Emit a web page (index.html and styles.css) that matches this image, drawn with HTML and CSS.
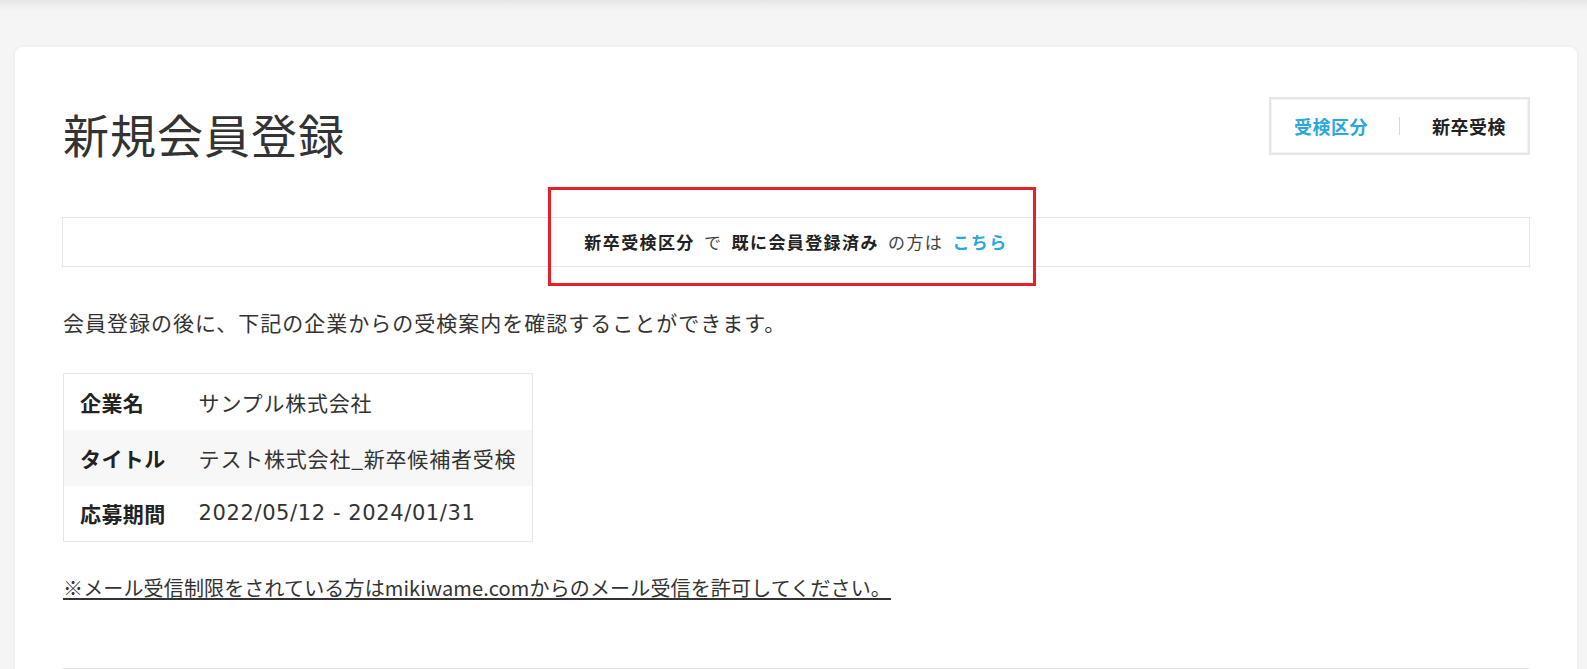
FILE: index.html
```html
<!DOCTYPE html>
<html lang="ja">
<head>
<meta charset="utf-8">
<title>新規会員登録</title>
<link rel="stylesheet" href="styles.css">
</head>
<body>
<div class="topbar"></div>
<main class="card">
  <div class="head-row">
    <h1 class="title">新規会員登録</h1>
    <div class="category">
      <span class="category-label">受検区分</span>
      <span class="category-sep"></span>
      <span class="category-value">新卒受検</span>
    </div>
  </div>

  <div class="notice-wrap">
    <div class="notice">
      <strong>新卒受検区分</strong> で <strong>既に会員登録済み</strong> の方は <a class="notice-link" href="#">こちら</a>
    </div>
    <div class="highlight"></div>
  </div>

  <p class="lead">会員登録の後に、下記の企業からの受検案内を確認することができます。</p>

  <table class="info">
    <tr>
      <th>企業名</th>
      <td>サンプル株式会社</td>
    </tr>
    <tr class="alt">
      <th>タイトル</th>
      <td>テスト株式会社_新卒候補者受検</td>
    </tr>
    <tr>
      <th>応募期間</th>
      <td class="date">2022/05/12 - 2024/01/31</td>
    </tr>
  </table>

  <p class="mail-note"><a href="#" class="mail-link">※メール受信制限をされている方はmikiwame.comからのメール受信を許可してください。</a></p>

  <hr class="divider">
  <div class="spacer"></div>
</main>
</body>
</html>
```

FILE: styles.css
```css
html, body {
  margin: 0;
  padding: 0;
  overflow: hidden;
}
body {
  background: #f5f5f5;
  font-family: "Noto Sans CJK JP", "Noto Sans", "Liberation Sans", sans-serif;
  color: #333333;
}
.topbar {
  height: 12px;
  background: linear-gradient(to bottom, #e4e4e4 0%, #efefef 45%, #f5f5f5 100%);
}
.card {
  background: #ffffff;
  margin: 35px 10px 0 15px;
  border-radius: 8px;
  box-shadow: 0 0 4px rgba(0, 0, 0, 0.06);
  padding: 50px 47px 0 47px;
}
.head-row {
  display: flex;
  justify-content: space-between;
  align-items: flex-start;
}
.title {
  margin: 9px 0 0 1px;
  font-size: 46px;
  font-weight: 400;
  line-height: 55px;
  letter-spacing: 1px;
  color: #333333;
}
.category {
  display: flex;
  align-items: center;
  height: 54px;
  padding: 0 22px 0 23px;
  border: 2px solid #e6e6e6;
  box-shadow: inset 0 0 0 1px #f4f4f4;
  font-size: 18px;
  font-weight: 700;
}
.category-label {
  color: #2aa7df;
  letter-spacing: 0.5px;
}
.category-sep {
  width: 1px;
  height: 18px;
  background: #d8d8d8;
  margin: 0 32px 0 31px;
}
.category-value {
  color: #222222;
  letter-spacing: 0.5px;
}
.notice-wrap {
  position: relative;
  margin-top: 56px;
}
.notice {
  border: 1px solid #e6e6e6;
  height: 48px;
  line-height: 48px;
  text-align: center;
  font-size: 17px;
  letter-spacing: 1.4px;
  word-spacing: 4px;
  color: #444444;
}
.notice strong {
  color: #222222;
  font-weight: 700;
}
.notice-link {
  color: #2aa7df;
  font-weight: 700;
  text-decoration: none;
}
.highlight {
  position: absolute;
  left: 486px;
  top: -30px;
  width: 482px;
  height: 93px;
  border: 3px solid #e5202b;
  pointer-events: none;
}
.lead {
  margin: 39px 0 0 1px;
  font-size: 21px;
  line-height: 32px;
  letter-spacing: 1px;
  color: #333333;
}
.info {
  margin: 35px 0 0 1px;
  border-collapse: collapse;
  border: 1px solid #e6e6e6;
  font-size: 21px;
}
.info tr {
  height: 56px;
}
.info tr.alt {
  background: #f7f7f7;
}
.info th {
  text-align: left;
  font-weight: 700;
  padding: 0 17px 0 16px;
  white-space: nowrap;
  color: #222222;
  letter-spacing: 0.4px;
}
.info td {
  padding: 0 16px 0 16px;
  white-space: nowrap;
  color: #333333;
  letter-spacing: 0.8px;
}
.info td.date {
  font-family: "DejaVu Sans", "Noto Sans CJK JP", sans-serif;
  font-size: 21px;
  letter-spacing: 0.6px;
}
.mail-note {
  margin: 31px 0 0 1px;
  font-size: 20px;
  line-height: 30px;
}
.mail-link {
  color: #333333;
  letter-spacing: 0.15px;
  text-decoration: underline;
  text-decoration-thickness: 2px;
  text-underline-offset: 2px;
}
.divider {
  margin: 65px 0 0 0;
  border: 0;
  border-top: 1px solid #e6e6e6;
}
.spacer {
  height: 60px;
}
```
